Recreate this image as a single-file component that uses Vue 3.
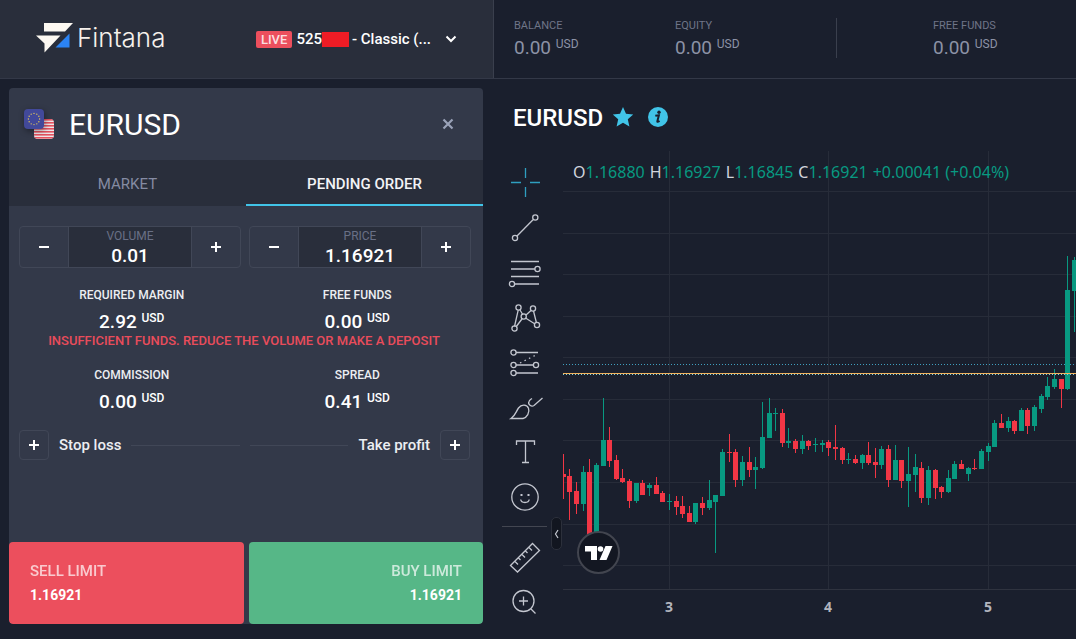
<script setup>
import { ref } from 'vue'

const volume = ref('0.01')
const price = ref('1.16921')

const stats = [
  { label: 'BALANCE', value: '0.00' },
  { label: 'EQUITY', value: '0.00' },
  { label: 'FREE FUNDS', value: '0.00' },
]

const ohlc = [
  ['O', '1.16880'],
  ['H', '1.16927'],
  ['L', '1.16845'],
  ['C', '1.16921'],
]

const gridLines = [41, 83, 124, 166, 207, 249, 290, 332, 374, 415]
const days = [
  { label: '3', x: 106 },
  { label: '4', x: 265 },
  { label: '5', x: 425 },
]

const stars = Array.from({ length: 12 }, (_, i) => ({
  x: 10 + 5.6 * Math.cos((i * Math.PI) / 6),
  y: 10 + 5.6 * Math.sin((i * Math.PI) / 6),
}))

// direction, high, body top, body bottom, low
const bars = [
  ['d', 304, 324, 327, 349], ['d', 319, 326, 342, 370], ['d', 332, 341, 354, 364],
  ['u', 316, 322, 354, 361], ['d', 309, 322, 388, 388], ['u', 313, 315, 386, 386],
  ['u', 248, 290, 316, 316], ['d', 277, 290, 311, 317], ['d', 305, 310, 329, 330],
  ['d', 319, 328, 332, 333], ['d', 329, 331, 351, 358], ['u', 333, 333, 351, 353],
  ['d', 330, 333, 345, 345], ['u', 333, 335, 338, 346], ['d', 327, 335, 344, 344],
  ['d', 341, 343, 352, 352], ['u', 344, 351, 352, 360], ['d', 346, 351, 357, 365],
  ['d', 346, 356, 364, 368], ['d', 356, 363, 372, 372], ['u', 353, 353, 372, 374],
  ['d', 347, 353, 358, 365], ['u', 330, 350, 358, 360], ['u', 345, 345, 352, 403],
  ['u', 299, 302, 346, 346], ['d', 284, 302, 303, 312], ['d', 299, 302, 330, 337],
  ['u', 306, 312, 330, 336], ['d', 297, 312, 320, 327], ['u', 307, 317, 320, 339],
  ['u', 252, 287, 318, 319], ['u', 248, 263, 288, 288], ['u', 258, 263, 264, 281],
  ['d', 259, 263, 293, 297], ['u', 278, 291, 293, 298], ['d', 289, 291, 299, 303],
  ['u', 285, 291, 299, 304], ['d', 290, 291, 296, 300], ['u', 288, 294, 295, 302],
  ['u', 290, 293, 295, 302], ['d', 290, 292, 298, 306], ['d', 275, 297, 299, 310],
  ['d', 297, 298, 310, 314], ['u', 303, 309, 310, 314], ['d', 305, 309, 313, 314],
  ['u', 304, 305, 313, 319], ['d', 292, 305, 313, 315], ['d', 298, 312, 315, 328],
  ['u', 296, 299, 315, 319], ['d', 295, 299, 330, 337], ['u', 295, 310, 330, 330],
  ['d', 310, 310, 331, 338], ['u', 297, 324, 331, 357], ['u', 304, 317, 325, 342],
  ['d', 312, 318, 348, 353], ['u', 316, 320, 348, 355], ['d', 319, 320, 338, 349],
  ['d', 336, 337, 342, 348], ['u', 320, 328, 342, 343], ['u', 311, 314, 329, 329],
  ['d', 310, 314, 319, 319], ['u', 317, 318, 324, 331], ['d', 309, 318, 319, 320],
  ['u', 299, 301, 319, 319], ['u', 293, 296, 302, 311], ['u', 270, 273, 297, 297],
  ['d', 264, 273, 278, 278], ['u', 267, 271, 278, 282], ['d', 270, 271, 281, 284],
  ['u', 258, 260, 281, 281], ['d', 258, 260, 276, 284], ['u', 255, 257, 276, 281],
  ['u', 244, 246, 259, 263], ['u', 227, 236, 247, 250], ['u', 219, 229, 237, 239],
  ['d', 229, 229, 239, 258], ['u', 106, 140, 239, 240], ['u', 107, 110, 141, 182],
]
const candles = bars.map(([dir, high, top, bottom, low], i) => ({
  dir, high, top, bottom, low, x: Math.floor(0.2 + 6.64 * i),
}))
</script>

<template>
  <div class="app">
    <header class="topbar">
      <div class="brand-area">
        <a class="brand" href="#" aria-label="Fintana">
          <svg width="37" height="30" viewBox="0 0 37 30" aria-hidden="true">
            <path d="M8 0h29l-8 8.500H8z" fill="#fdf9f2" />
            <path d="M0 12.500h24.500L8.500 29.500v-9z" fill="#fdf9f2" />
            <path d="M33.500 10.500V24.500H19.500z" fill="#2b83f3" />
          </svg>
          <span>Fintana</span>
        </a>
        <button class="account" type="button">
          <span class="live">LIVE</span>
          <span class="acc-no">525</span><span class="mask"></span>
          <span class="acc-type">- Classic (...</span>
          <svg width="12" height="8" viewBox="0 0 12 8" aria-hidden="true">
            <path d="M1.500 1.500 6 6l4.500-4.500" fill="none" stroke="#fff" stroke-width="2" />
          </svg>
        </button>
      </div>
      <dl class="stats">
        <div v-for="s in stats" :key="s.label" class="stat">
          <dt>{{ s.label }}</dt>
          <dd>{{ s.value }} <span class="cur">USD</span></dd>
        </div>
      </dl>
    </header>

    <div class="body">
      <aside class="side">
        <section class="panel">
          <div class="panel-head">
            <svg class="flags" width="36" height="30" viewBox="0 0 36 30" aria-hidden="true">
              <clipPath id="us"><rect x="10" y="10" width="20" height="20" rx="4" /></clipPath>
              <g clip-path="url(#us)">
                <rect x="10" y="10" width="20" height="20" fill="#efe6ea" />
                <rect v-for="n in 7" :key="n" x="10" :y="7 + n * 3" width="20" height="1.600" fill="#e4525f" />
              </g>
              <rect class="eu" width="20" height="20" rx="4" fill="#42499a" />
              <circle v-for="(s, i) in stars" :key="i" :cx="s.x" :cy="s.y" r="0.700" fill="#e2c65a" />
            </svg>
            <h2>EURUSD</h2>
            <button class="close" type="button" aria-label="Close">
              <svg width="12" height="12" viewBox="0 0 12 12"><path d="m1.500 1.500 9 9m0-9-9 9" stroke="#9aa2b8" stroke-width="2.200" /></svg>
            </button>
          </div>

          <div class="tabs" role="tablist">
            <button type="button" role="tab" aria-selected="false">MARKET</button>
            <button type="button" role="tab" aria-selected="true" class="on">PENDING ORDER</button>
          </div>

          <div class="steppers">
            <div class="stepper">
              <button type="button" aria-label="Decrease volume"><i class="minus"></i></button>
              <div class="field">
                <label for="volume">VOLUME</label>
                <input id="volume" v-model="volume" type="text" />
              </div>
              <button type="button" aria-label="Increase volume"><i class="plus"></i></button>
            </div>
            <div class="stepper">
              <button type="button" aria-label="Decrease price"><i class="minus"></i></button>
              <div class="field">
                <label for="price">PRICE</label>
                <input id="price" v-model="price" type="text" />
              </div>
              <button type="button" aria-label="Increase price"><i class="plus"></i></button>
            </div>
          </div>

          <dl class="info">
            <div><dt>REQUIRED MARGIN</dt><dd>2.92 <span class="cur">USD</span></dd></div>
            <div><dt>FREE FUNDS</dt><dd>0.00 <span class="cur">USD</span></dd></div>
          </dl>
          <p class="warn">INSUFFICIENT FUNDS. REDUCE THE VOLUME OR MAKE A DEPOSIT</p>
          <dl class="info">
            <div><dt>COMMISSION</dt><dd>0.00 <span class="cur">USD</span></dd></div>
            <div><dt>SPREAD</dt><dd>0.41 <span class="cur">USD</span></dd></div>
          </dl>

          <div class="limits">
            <div class="limit">
              <button id="sl" type="button" aria-label="Add stop loss"><i class="plus"></i></button>
              <label for="sl">Stop loss</label><span class="rule"></span>
            </div>
            <div class="limit">
              <span class="rule"></span><label for="tp">Take profit</label>
              <button id="tp" type="button" aria-label="Add take profit"><i class="plus"></i></button>
            </div>
          </div>

          <div class="deal">
            <button class="sell" type="button"><span>SELL LIMIT</span><strong>1.16921</strong></button>
            <button class="buy" type="button"><span>BUY LIMIT</span><strong>1.16921</strong></button>
          </div>
        </section>
      </aside>

      <main class="work">
        <div class="symbol">
          <h1>EURUSD</h1>
          <button type="button" aria-label="Favourite">
            <svg width="22" height="22" viewBox="0 0 22 22"><path d="m11 1 3 6.700 7.200.8-5.400 4.800 1.600 7.200L11 16.800l-6.400 3.700 1.600-7.200L.8 8.500 8 7.700z" fill="#41c4e8" /></svg>
          </button>
          <button type="button" aria-label="Information">
            <svg width="20" height="20" viewBox="0 0 20 20"><circle cx="10" cy="10" r="10" fill="#41c4e8" /><circle cx="11" cy="5.300" r="1.700" fill="#1a1f2d" /><path d="M7.300 8.800c1.400-.3 2.500-.5 3.600-.5l-1.500 5.600c-.3 1.200.4 1.200 2.200.1" fill="none" stroke="#1a1f2d" stroke-width="2" /></svg>
          </button>
        </div>

        <div class="chart-row">
          <nav class="tools" aria-label="Drawing tools">
            <button type="button" class="active" aria-label="Cross">
              <svg viewBox="0 0 34 34" stroke-width="1.500"><path d="M17.500 3v10M17.500 22v10M3 17.500h10M22 17.500h10" /></svg>
            </button>
            <button type="button" aria-label="Trend line">
              <svg viewBox="0 0 34 34"><path d="M9 26 25 9.800" /><circle cx="7" cy="28" r="2.600" /><circle cx="27.300" cy="7.500" r="2.600" /></svg>
            </button>
            <button type="button" aria-label="Fib retracement">
              <svg viewBox="0 0 34 34"><path d="M3 6.500h28M3 14h24M3 21.500h28M7 29h24" /><circle cx="29.500" cy="14" r="2.600" /><circle cx="4" cy="29" r="2.600" /></svg>
            </button>
            <button type="button" aria-label="Patterns">
              <svg viewBox="0 0 34 34"><path d="M10.200 10.200 6.500 26.500M12 10l3 5M8.300 26.500l6-8M18 15l5-4.500M25.500 11l3 12M17.500 18l9.500 6" /><circle cx="10.500" cy="7.500" r="2.600" /><circle cx="25" cy="8.500" r="2.600" /><circle cx="15.700" cy="16.500" r="2.600" /><circle cx="6.500" cy="28.500" r="2.600" /><circle cx="29" cy="25" r="2.600" /></svg>
            </button>
            <button type="button" aria-label="Forecasting">
              <svg viewBox="0 0 34 34"><path d="M8 7.500h22M8 20h17M8 28h22" /><path d="m12 18 16-8" stroke-dasharray="1.500 3.500" /><circle cx="5.500" cy="7.500" r="2.600" /><circle cx="5.500" cy="20" r="2.600" /><circle cx="28" cy="20" r="2.600" /><circle cx="5.500" cy="28" r="2.600" /></svg>
            </button>
            <button type="button" aria-label="Brush">
              <svg viewBox="0 0 34 34"><path d="M3 28.500c4.500-3 5-7 7.500-10.500 3-4 8.500-3.500 10 .3 1.500 4.200-1.500 9.200-5.500 10.200zM34.500 8l-8.500 7.500c-2.500 1.800-6.500-1-5-4 .6-1.600 2-2.300 3-3" /></svg>
            </button>
            <button type="button" aria-label="Text">
              <svg viewBox="0 0 34 34"><path d="M8.500 10V6h18v4M17.500 6v21.500M14 27.500h7" /></svg>
            </button>
            <button type="button" aria-label="Icons">
              <svg viewBox="0 0 34 34"><circle cx="17" cy="17" r="13.200" /><path d="M12.700 19.500c.5 4 8 4 8.500 0" /><path d="M12.500 15h2M19.500 15h2" stroke-width="2.200" /></svg>
            </button>
            <hr />
            <button type="button" aria-label="Measure">
              <svg viewBox="0 0 34 34"><path d="M2.500 25.500 24.500 3.500 31.500 10.500 9.500 32zM7 21.500l3 3M10.500 18l2 2M14 14.500l3 3M17.500 11l2 2M21 7.500l3 3" /></svg>
            </button>
            <button type="button" aria-label="Zoom in">
              <svg viewBox="0 0 34 34"><circle cx="15.500" cy="16" r="10.500" /><path d="m23 24 4.500 4.500M15.500 11.500v9M11 16h9" /></svg>
            </button>
          </nav>

          <div class="chart">
            <div class="plot">
              <svg class="candles" width="100%" height="440" shape-rendering="crispEdges" role="img" aria-label="EURUSD candlestick chart">
                <rect v-for="d in days" :key="d.label" class="grid" :x="d.x" y="1" width="1" height="439" />
                <rect v-for="y in gridLines" :key="y" class="grid" x="0" :y="y" width="100%" height="1" />
                <rect class="axis" x="0" y="439" width="100%" height="1" />
                <line class="ask" x1="0" x2="100%" y1="214.500" y2="214.500" />
                <g v-for="(c, i) in candles" :key="i" :class="c.dir">
                  <rect :x="c.x" :y="c.high" width="1" :height="c.low - c.high" />
                  <rect :x="c.x - 2" :y="c.top" width="5" :height="c.bottom - c.top" />
                </g>
                <rect class="bid" x="0" y="223" width="100%" height="1" />
                <line class="last" x1="0" x2="100%" y1="224.500" y2="224.500" />
              </svg>
              <p class="ohlc">
                <span v-for="[k, v] in ohlc" :key="k">{{ k }}<b>{{ v }}</b></span>
                <b>+0.00041 (+0.04%)</b>
              </p>
              <a class="tv" href="#" aria-label="TradingView">
                <svg width="28" height="16" viewBox="0 0 28 16"><path d="M0 1h12v14H6V6.500H0zM20.500 1h7L21.500 15h-7z" fill="#fff" /><circle cx="15.500" cy="4" r="2.800" fill="#fff" /></svg>
              </a>
              <button class="handle" type="button" aria-label="Collapse toolbar">
                <svg width="5" height="10" viewBox="0 0 5 10"><path d="M4 1 1.500 5 4 9" fill="none" stroke="#c5c8d0" stroke-width="1.200" /></svg>
              </button>
            </div>
            <div class="dates">
              <span v-for="d in days" :key="d.label" :style="{ left: d.x + 'px' }">{{ d.label }}</span>
            </div>
          </div>
        </div>
      </main>
    </div>
  </div>
</template>

<style>
body { background: #1a1f2d; }
</style>

<style scoped>
* { box-sizing: border-box; margin: 0; padding: 0; }
.app { display: flex; flex-direction: column; min-height: 100vh; background: #1a1f2d; border-right: 1px solid #fff; color: #fff; font-family: Roboto, "Liberation Sans", sans-serif; }
button, input { font: inherit; color: inherit; background: none; border: 0; }
button { cursor: pointer; }
svg { display: block; }
a { color: inherit; text-decoration: none; }

.topbar { display: flex; height: 79px; border-bottom: 1px solid #333847; }
.brand-area { width: 494px; flex: none; display: flex; align-items: center; justify-content: space-between; padding: 0 36px; background: #292e3b; border-right: 1px solid #3a3f4d; }
.brand { display: flex; align-items: center; gap: 4px; padding-bottom: 2px; color: #f6f1ec; font: 300 26px/32px Inter, sans-serif; }
.account { display: flex; align-items: center; font-size: 15px; font-weight: 500; line-height: 20px; white-space: nowrap; }
.live { background: #ec4f5d; color: #fbdfe2; border-radius: 2px; font-size: 13px; line-height: 17px; padding: 0 5px; margin-right: 4px; }
.mask { width: 27px; height: 15px; background: #ee1c25; margin-right: 3px; }
.acc-type { margin-right: 14px; }

.stats { display: flex; flex: 1; min-width: 0; padding: 18px 0 0 20px; color: #8c92a6; }
.stat { width: 161px; height: 40px; flex: none; }
.stat:last-child { border-left: 1px solid #3a3f4d; padding-left: 96px; width: auto; }
.stat dt { font-size: 11px; line-height: 15px; color: #6f7588; white-space: nowrap; }
.stat dd { font-size: 19px; line-height: 30px; white-space: nowrap; }
.cur { font-size: 12px; vertical-align: 6px; line-height: 1; }

.body { display: flex; flex: 1; }
.side { width: 494px; flex: none; display: flex; padding: 9px 11px 15px 9px; }
.panel { flex: 1; display: flex; flex-direction: column; background: #333949; border-radius: 4px; overflow: hidden; }
.panel-head { display: flex; align-items: center; height: 72px; padding: 0 29px 0 15px; }
.flags { overflow: visible; margin-right: 9px; }
.eu { filter: drop-shadow(1px 2px 3px #0006); }
.panel-head h2 { font-size: 30px; line-height: 34px; padding-top: 2px; font-weight: 400; flex: 1; }
.tabs { display: grid; grid-template-columns: 1fr 1fr; height: 46px; background: #292e3b; }
.tabs button { font-size: 15px; color: #858ba3; padding-top: 2px; }
.tabs .on { color: #f2f3f6; font-weight: 500; box-shadow: inset 0 -2px #41c4e8; }

.steppers { display: grid; grid-template-columns: 1fr 1fr; gap: 8px; padding: 20px 12px 0 10px; }
.stepper { display: flex; height: 42px; border: 1px solid #414757; border-radius: 4px; overflow: hidden; }
.stepper button { width: 48px; display: grid; place-items: center; }
.field { flex: 1; min-width: 0; background: #292e3b; border: solid #414757; border-width: 0 1px; text-align: center; }
.field label { display: block; font-size: 12px; line-height: 18px; color: #697086; }
.field input { display: block; width: 100%; text-align: center; font-size: 19px; line-height: 22px; height: 22px; font-weight: 500; }
.minus, .plus { width: 10px; height: 10px; display: block; background: linear-gradient(#fff, #fff) center / 10px 2px no-repeat; }
.plus { background: linear-gradient(#fff, #fff) center / 10px 2px no-repeat, linear-gradient(#fff, #fff) center / 2px 10px no-repeat; }

.info { display: grid; grid-template-columns: 1fr 1fr; padding: 18px 13px 0 10px; text-align: center; }
.info dt { font-size: 12px; line-height: 18px; font-weight: 500; color: #eceef2; }
.info dd { font-size: 19px; line-height: 28px; font-weight: 500; margin-top: 4px; height: 26px; }
.warn { text-align: center; color: #e94c5b; font-size: 13px; line-height: 14px; font-weight: 500; padding-right: 4px; white-space: nowrap; }

.limits { display: grid; grid-template-columns: 1fr 1fr; gap: 10px; padding: 16px 13px 0 10px; }
.limit { display: flex; align-items: center; gap: 10px; }
.limit button { width: 30px; height: 30px; border: 1px solid #414757; border-radius: 4px; display: grid; place-items: center; }
.limit label { font-size: 15px; line-height: 20px; font-weight: 500; color: #eceef2; }
.rule { flex: 1; height: 1px; background: #414757; }

.deal { display: grid; grid-template-columns: 1fr 1fr; gap: 5px; margin-top: auto; }
.deal button { height: 82px; padding: 0 21px; border-radius: 4px; display: flex; flex-direction: column; justify-content: center; font-size: 15px; line-height: 24px; }
.deal span { font-weight: 500; opacity: 0.7; }
.deal strong { font-weight: 700; font-size: 14px; }
.sell { background: #ec4f5d; align-items: flex-start; }
.buy { background: #56b787; align-items: flex-end; }

.work { flex: 1; min-width: 0; display: flex; flex-direction: column; }
.symbol { display: flex; align-items: center; height: 71px; padding: 5px 0 0 19px; }
.symbol h1 { font-size: 24px; line-height: 28px; padding-top: 2px; font-weight: 500; margin-right: 9px; }
.symbol button + button { margin-left: 14px; }
.chart-row { display: flex; flex: 1; }
.tools { width: 69px; flex: none; display: flex; flex-direction: column; align-items: flex-start; padding: 9px 0 0 8px; }
.tools button { width: 45px; height: 45px; display: grid; place-items: center; }
.tools svg { width: 34px; height: 34px; fill: none; stroke: #c3c6cf; stroke-width: 1.3; overflow: visible; }
.tools .active svg { stroke: #2f9fc0; }
.tools hr { width: 45px; height: 1px; border: 0; background: #434651; margin: 7px 0; }

.chart { flex: 1; min-width: 0; }
.plot { position: relative; height: 440px; }
.candles { overflow: hidden; }
.grid { fill: #272c39; }
.axis { fill: #2f333f; }
.u { fill: #089981; }
.d { fill: #f23645; }
.ask { stroke: #3f9fbf; stroke-dasharray: 1 2; }
.bid { fill: #f0b35f; }
.last { stroke: #7fd3dc; stroke-dasharray: 1 2; }
.ohlc { position: absolute; left: 10px; top: 11px; display: flex; gap: 5px; font: 400 16px/22px "Noto Sans", sans-serif; color: #d1d4dc; white-space: nowrap; }
.ohlc b { font-weight: 400; color: #089981; }
.tv { position: absolute; left: 14px; top: 381px; width: 43px; height: 43px; border: 2px solid #42454f; border-radius: 50%; background: #131722; display: grid; place-items: center; }
.handle { position: absolute; left: -12px; top: 367px; width: 11px; height: 33px; border: 1px solid #2c303b; border-radius: 5px; background: #121620; display: grid; place-items: center; }
.dates { position: relative; height: 34px; overflow: hidden; font: 700 14px/34px "Noto Sans", sans-serif; color: #b2b5be; }
.dates span { position: absolute; width: 20px; margin-left: -10px; text-align: center; }
</style>
